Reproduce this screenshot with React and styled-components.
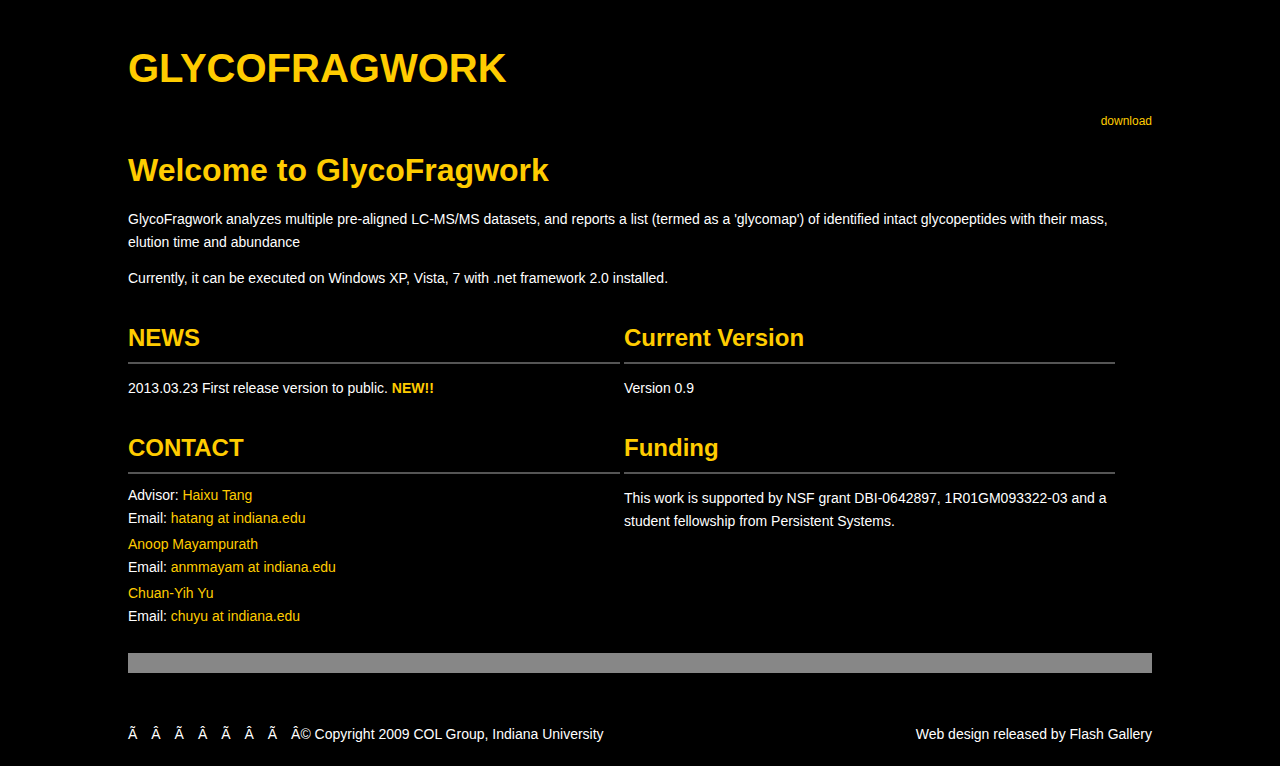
import styled, { createGlobalStyle } from "styled-components";

const GlobalStyle = createGlobalStyle`
  html, body {
    margin: 0;
    padding: 0;
    background: #000000;
  }
  body {
    font-family: "Liberation Sans", Arial, sans-serif;
    font-size: 14px;
    color: #ffffff;
  }
`;

const Page = styled.div`
  width: 1024px;
  margin: 0 auto;
  padding-top: 48px;
`;

const SiteTitle = styled.h1`
  margin: 0;
  font-size: 40px;
  line-height: 40px;
  font-weight: bold;
  color: #ffcc00;
`;

const TopNav = styled.div`
  display: flex;
  justify-content: flex-end;
  margin-top: 26px;
  height: 14px;

  a {
    font-size: 12px;
    color: #ffcc00;
    text-decoration: none;
    line-height: 14px;
  }
`;

const Welcome = styled.h2`
  margin: 24px 0 0;
  font-size: 32px;
  line-height: 36px;
  font-weight: bold;
  color: #ffcc00;
`;

const Intro = styled.div`
  margin-top: 20px;

  p {
    margin: 0 0 13px;
    line-height: 23px;
  }
`;

const Columns = styled.div`
  display: grid;
  grid-template-columns: 492px 491px;
  column-gap: 4px;
  margin-top: 34px;
`;

const Box = styled.div`
  margin-bottom: 7px;
`;

const BoxTitle = styled.h3`
  margin: 0;
  padding-bottom: 10px;
  font-size: 24px;
  line-height: 28px;
  font-weight: bold;
  color: #ffcc00;
  border-bottom: 2px solid #555555;
`;

const BoxBody = styled.div`
  padding-top: ${(p) => (p.$tight ? "10px" : "13px")};
  min-height: 50px;

  p {
    margin: 0 0 3px;
    line-height: 23px;
  }
`;

const Gold = styled.a`
  color: #ffcc00;
  text-decoration: none;
  font-weight: ${(p) => (p.$bold ? "bold" : "normal")};
`;

const GrayBar = styled.div`
  height: 20px;
  background: #878787;
  margin-top: 15px;
`;

const Footer = styled.div`
  display: flex;
  justify-content: space-between;
  margin-top: 51px;
  line-height: 20px;
`;

const Junk = styled.span`
  display: inline-block;
  width: 23.3px;
`;

export default function App() {
  const garbled = ["Ã", "Â", "Ã", "Â", "Ã", "Â", "Ã"];
  return (
    <>
      <GlobalStyle />
      <Page>
        <SiteTitle>GLYCOFRAGWORK</SiteTitle>
        <TopNav>
          <a href="#">download</a>
        </TopNav>

        <Welcome>Welcome to GlycoFragwork</Welcome>
        <Intro>
          <p>
            GlycoFragwork analyzes multiple pre-aligned LC-MS/MS datasets, and reports a list (termed as a 'glycomap') of identified intact glycopeptides with their mass, elution time and abundance
          </p>
          <p>Currently, it can be executed on Windows XP, Vista, 7 with .net framework 2.0 installed.</p>
        </Intro>

        <Columns>
          <Box>
            <BoxTitle>NEWS</BoxTitle>
            <BoxBody>
              <p>
                2013.03.23 First release version to public. <Gold $bold>NEW!!</Gold>
              </p>
            </BoxBody>
          </Box>
          <Box>
            <BoxTitle>Current Version</BoxTitle>
            <BoxBody>
              <p>Version 0.9</p>
            </BoxBody>
          </Box>
          <Box>
            <BoxTitle>CONTACT</BoxTitle>
            <BoxBody $tight>
              <p>
                Advisor: <Gold href="#">Haixu Tang</Gold>
                <br />
                Email: <Gold href="#">hatang at indiana.edu</Gold>
              </p>
              <p>
                <Gold href="#">Anoop Mayampurath</Gold>
                <br />
                Email: <Gold href="#">anmmayam at indiana.edu</Gold>
              </p>
              <p>
                <Gold href="#">Chuan-Yih Yu</Gold>
                <br />
                Email: <Gold href="#">chuyu at indiana.edu</Gold>
              </p>
            </BoxBody>
          </Box>
          <Box>
            <BoxTitle>Funding</BoxTitle>
            <BoxBody>
              <p>
                This work is supported by NSF grant DBI-0642897, 1R01GM093322-03 and a student fellowship from Persistent Systems.
              </p>
            </BoxBody>
          </Box>
        </Columns>

        <GrayBar />
        <Footer>
          <span>
            {garbled.map((c, i) => (
              <Junk key={i}>{c}</Junk>
            ))}
            Â© Copyright 2009 COL Group, Indiana University
          </span>
          <span>Web design released by Flash Gallery</span>
        </Footer>
      </Page>
    </>
  );
}
